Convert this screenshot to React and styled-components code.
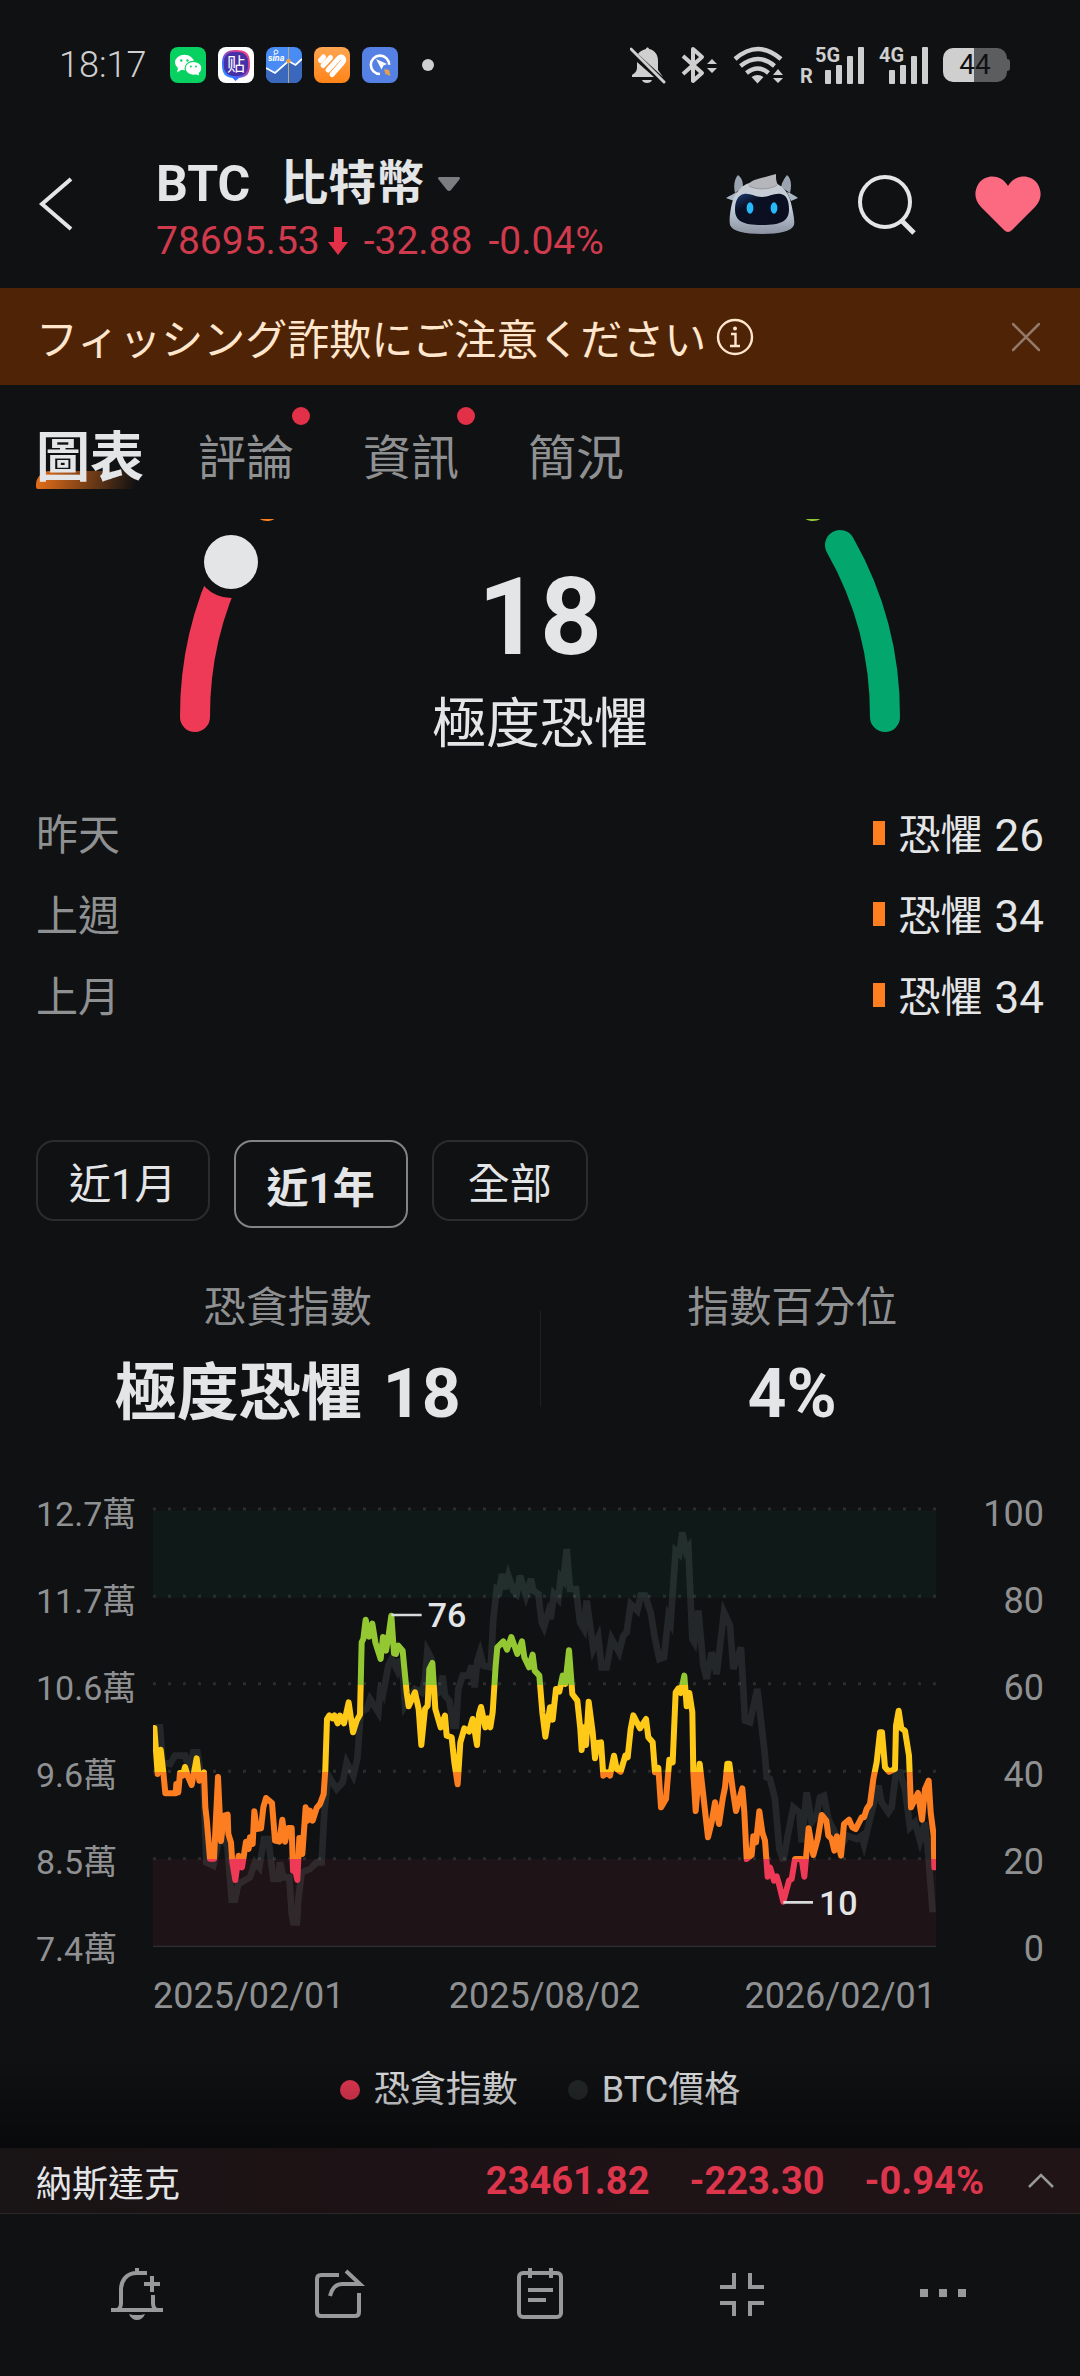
import { useState } from "react";
import styled, { createGlobalStyle } from "styled-components";

const GlobalStyle = createGlobalStyle`
  * {
    box-sizing: border-box;
  }
  body {
    margin: 0;
    background: #101113;
    color: #e4e5e7;
    font-family: Roboto, "Noto Sans CJK TC", "Noto Sans CJK JP", sans-serif;
  }
  button {
    padding: 0;
    border: none;
    background: none;
    color: inherit;
    font-family: inherit;
  }
  svg {
    display: block;
  }
`;

const Page = styled.div`
  display: flex;
  flex-direction: column;
`;

/* status bar */

const StatusBar = styled.div`
  display: flex;
  align-items: center;
  justify-content: space-between;
  height: 130px;
  padding: 0 70px 0 59px;
  color: #cfcfcf;
`;
const Clock = styled.span`
  margin-right: 12px;
  font-size: 36px;
  font-weight: 300;
`;
const StatusGroup = styled.div`
  display: flex;
  align-items: center;
  gap: ${(props) => props.$gap}px;
`;
const MoreDot = styled.span`
  width: 12px;
  height: 12px;
  margin-left: 12px;
  border-radius: 50%;
  background: #cfcfcf;
`;
const Battery = styled.span`
  display: flex;
  align-items: center;
`;
const BatteryBody = styled.span`
  width: 64px;
  height: 34px;
  border-radius: 10px;
  background: linear-gradient(90deg, #cfcfcf 48%, #5c5d5f 48%);
  color: #101113;
  font-size: 28px;
  line-height: 34px;
  text-align: center;
`;
const BatteryTip = styled.span`
  width: 3px;
  height: 12px;
  border-radius: 0 3px 3px 0;
  background: #5c5d5f;
`;

/* header */

const Header = styled.header`
  display: flex;
  align-items: center;
  height: 158px;
  padding: 0 38px 10px 36px;
`;
const IconButton = styled.button`
  display: flex;
  align-items: center;
  justify-content: center;
`;
const Symbol = styled.div`
  flex: 1;
  align-self: flex-end;
  padding: 0 0 10px 80px;
`;
const SymbolName = styled.h1`
  display: flex;
  align-items: center;
  gap: 30px;
  margin: 0;
  font-size: 48px;
  font-weight: 700;
  line-height: 60px;
`;
const SymbolCode = styled.span`
  font-size: 50px;
`;
const SymbolLocal = styled.span`
  display: flex;
  align-items: center;
  gap: 14px;
`;
const Quote = styled.div`
  display: flex;
  align-items: center;
  gap: 16px;
  color: #cf3a4d;
  font-size: 39px;
  line-height: 54px;
`;
const QuotePrice = styled.span`
  display: flex;
  align-items: center;
  gap: 8px;
`;
const HeaderActions = styled.div`
  display: flex;
  align-items: center;
  gap: 58px;
`;

/* banner */

const Banner = styled.div`
  display: flex;
  align-items: center;
  height: 97px;
  padding: 0 40px 0 36px;
  background: #4f2306;
  color: #ffe6cc;
`;
const BannerText = styled.span`
  margin-right: 10px;
  font-family: "Noto Sans CJK JP", sans-serif;
  font-size: 42px;
`;
const BannerClose = styled(IconButton)`
  margin-left: auto;
`;

/* tabs */

const Tabs = styled.nav`
  display: flex;
  align-items: center;
  height: 134px;
  padding: 14px 33px 0;
`;
const TabSlot = styled.div`
  width: 165px;
`;
const Tab = styled.button`
  position: relative;
  padding: 0 ${(props) => (props.$active ? 3 : 0)}px;
  color: ${(props) => (props.$active ? "#e4e5e7" : "#8f9092")};
  font-size: ${(props) => (props.$active ? 54 : 48)}px;
  font-weight: ${(props) => (props.$active ? 700 : 400)};
  line-height: 60px;
  white-space: nowrap;
  z-index: 0;
`;
const TabUnderline = styled.span`
  position: absolute;
  left: 3px;
  right: 3px;
  bottom: 0;
  height: 18px;
  border-radius: 14px 0 0 2px;
  background: linear-gradient(100deg, #e8701a, rgba(232, 112, 26, 0) 92%);
  z-index: -1;
`;
const TabDot = styled.span`
  position: absolute;
  top: -22px;
  right: -16px;
  width: 18px;
  height: 18px;
  border-radius: 50%;
  background: #e23049;
`;

/* gauge */

const Content = styled.main`
  position: relative;
  display: flex;
  flex-direction: column;
`;
const Gauge = styled.section`
  display: grid;
  height: 276px;
  > * {
    grid-area: 1 / 1;
  }
`;
const GaugeDrawing = styled.svg`
  width: 100%;
  overflow: hidden;
`;
const GaugeText = styled.div`
  padding-top: 38px;
  text-align: center;
`;
const GaugeValue = styled.div`
  font-size: 108px;
  font-weight: 700;
  line-height: 120px;
`;
const GaugeLabel = styled.div`
  padding-top: 18px;
  font-size: 54px;
  line-height: 60px;
`;

const History = styled.dl`
  margin: 0 0 102px;
  padding: 0 36px;
`;
const HistoryRow = styled.div`
  display: flex;
  align-items: center;
  justify-content: space-between;
  height: 81px;
  font-size: 42px;
  line-height: 60px;
`;
const HistoryTerm = styled.dt`
  color: #8f9092;
`;
const HistoryValue = styled.dd`
  display: flex;
  align-items: center;
  margin: 0;
`;
const HistoryNumber = styled.span`
  margin-left: 12px;
  font-size: 44px;
`;
const Mark = styled.span`
  width: 12px;
  height: 24px;
  margin: 0 14px 6px 0;
  background: #ff7e20;
`;

/* range chips */

const Ranges = styled.div`
  display: flex;
  align-items: flex-start;
  gap: 24px;
  height: 88px;
  padding: 0 36px;
`;
const Chip = styled.button`
  min-width: 156px;
  height: ${(props) => (props.$active ? 88 : 81)}px;
  padding: 0 31px;
  border: 2px solid ${(props) => (props.$active ? "#828385" : "#2b2c2e")};
  border-radius: 18px;
  font-size: 42px;
  font-weight: ${(props) => (props.$active ? 700 : 400)};
`;

/* stats */

const Stats = styled.section`
  display: grid;
  grid-template-columns: 1fr 1px 1fr;
  align-items: center;
  margin: 50px 36px 52px;
`;
const Stat = styled.div`
  text-align: center;
`;
const StatLabel = styled.div`
  color: #8f9092;
  font-size: 42px;
  line-height: 60px;
`;
const StatValue = styled.div`
  display: flex;
  align-items: center;
  justify-content: center;
  gap: 20px;
  height: 90px;
  margin-top: 11px;
  font-size: 62px;
  font-weight: 700;
  line-height: 90px;
`;
const StatNumber = styled.span`
  font-size: 68px;
`;
const Divider = styled.span`
  height: 96px;
  background: #1f2022;
`;

/* chart */

const Chart = styled.section`
  display: grid;
  grid-template-columns: 117px 1fr 108px;
  padding: 0 36px;
  color: #8f9092;
  font-size: 36px;
  line-height: 44px;
`;
const Scale = styled.div`
  display: flex;
  flex-direction: column;
  justify-content: space-between;
  padding-top: 1px;
  font-size: ${(props) => (props.$align === "left" ? 34 : 36)}px;
  text-align: ${(props) => props.$align};
  white-space: nowrap;
`;
const Plot = styled.svg`
  width: 100%;
  margin: 18px 0 24px;
  overflow: visible;
`;
const Dates = styled.div`
  display: flex;
  justify-content: space-between;
  grid-column: 2;
  padding-top: 3px;
`;
const Legend = styled.div`
  display: flex;
  justify-content: center;
  gap: 50px;
  padding: 50px 0 36px;
  font-size: 36px;
  line-height: 44px;
`;
const LegendItem = styled.span`
  display: flex;
  align-items: center;
  gap: 14px;
`;
const LegendDot = styled.span`
  width: 20px;
  height: 20px;
  border-radius: 50%;
  background: ${(props) => props.$color};
`;
const Fade = styled.div`
  position: absolute;
  right: 0;
  bottom: 0;
  left: 0;
  height: 90px;
  background: linear-gradient(rgba(0, 0, 0, 0), rgba(0, 0, 0, 0.45));
`;

/* footer */

const Ticker = styled.div`
  display: flex;
  align-items: center;
  height: 66px;
  padding: 0 26px 0 36px;
  border-bottom: 1px solid #2a2728;
  background: linear-gradient(90deg, #191415, #1d1215 35%, #201417);
`;
const TickerName = styled.span`
  flex: 1;
  font-size: 36px;
`;
const TickerNumbers = styled.span`
  display: flex;
  gap: 40px;
  margin-right: 44px;
  color: #dc354c;
  font-size: 38px;
  font-weight: 700;
`;
const Toolbar = styled.footer`
  display: grid;
  grid-template-columns: repeat(5, 1fr);
  height: 162px;
  padding: 0 36px 4px;
`;

const history = [
  { when: "昨天", value: 26 },
  { when: "上週", value: 34 },
  { when: "上月", value: 34 },
];

const tabs = [
  { label: "圖表" },
  { label: "評論", dot: true },
  { label: "資訊", dot: true },
  { label: "簡況" },
];

const ranges = ["近1月", "近1年", "全部"];

// plot units: 2349 wide, 1312 high, y goes down
const indexLine =
  "4,657 14,795 23,722 31,790 37,853 68,853 70,825 76,850 81,792 89,800 96,774 106,805 116,828 131,748 139,815 153,790 157,895 161,930 171,1049 183,1049 195,804 204,996 213,920 224,917 226,975 234,1000 238,1060 247,1113 257,1040 267,1075 279,998 287,1020 291,985 299,1005 304,907 311,960 324,958 331,895 339,867 357,882 366,995 379,998 388,932 396,998 406,957 416,957 420,1085 426,1080 433,1113 439,987 448,1035 458,895 464,935 471,905 479,935 491,897 501,885 512,855 517,780 522,630 529,619 538,628 544,619 554,643 561,620 573,643 587,580 600,670 611,635 621,617 626,400 631,390 638,332 648,383 658,344 667,400 683,450 690,384 699,425 706,385 715,320 723,433 729,435 736,410 749,425 761,550 767,592 786,550 797,600 805,708 816,600 824,590 829,480 838,462 847,600 863,655 876,620 881,680 896,685 904,760 914,826 922,700 934,658 948,668 959,630 972,708 978,615 984,594 997,655 1005,628 1012,655 1019,610 1028,470 1033,415 1051,397 1062,422 1075,384 1093,435 1107,397 1114,445 1128,475 1139,437 1145,485 1159,500 1168,610 1177,683 1191,595 1199,632 1209,540 1219,548 1229,500 1237,525 1248,424 1258,555 1273,575 1282,660 1286,723 1293,655 1299,708 1307,578 1319,670 1326,748 1333,702 1344,700 1351,800 1361,790 1371,800 1383,740 1391,780 1403,788 1417,740 1424,745 1433,660 1441,619 1461,658 1479,630 1486,685 1499,700 1506,790 1516,777 1524,895 1539,870 1549,752 1559,760 1568,550 1576,538 1583,552 1594,500 1601,592 1609,552 1618,610 1621,790 1628,906 1640,764 1651,860 1665,985 1676,940 1686,880 1698,945 1709,870 1716,835 1723,764 1729,764 1739,840 1749,906 1768,838 1774,910 1781,1050 1796,1038 1801,982 1809,1000 1819,907 1828,970 1836,995 1844,1103 1851,1075 1863,1115 1871,1102 1878,1125 1891,1178 1908,1115 1916,1110 1926,1050 1946,1050 1954,1103 1967,958 1981,1038 1994,990 2006,918 2020,935 2026,980 2036,990 2044,1025 2052,982 2064,1040 2073,945 2088,932 2098,955 2108,960 2121,935 2126,925 2133,925 2141,900 2151,885 2161,810 2171,760 2181,670 2187,670 2196,775 2208,788 2221,782 2226,780 2229,650 2237,605 2245,658 2256,665 2268,740 2274,895 2295,852 2307,932 2316,840 2327,815 2333,910 2342,980 2344,1075";
const priceLine =
  "9,655 21,655 29,760 51,765 66,740 96,740 109,780 121,730 133,730 141,780 151,810 160,1060 181,1070 201,980 223,1010 236,1172 246,1172 256,1125 291,1105 306,1060 319,1075 333,990 346,990 361,1110 376,1110 381,1060 391,1105 409,1105 416,1215 421,1240 432,1240 436,1170 446,1090 471,1080 491,1060 506,1060 514,910 526,800 551,840 569,820 581,760 601,800 613,750 623,610 641,600 651,570 676,610 683,530 691,550 706,470 716,450 731,480 736,450 751,510 756,590 786,540 806,550 816,510 823,425 836,450 841,560 859,550 869,500 876,560 889,575 901,650 909,650 916,540 929,500 946,500 956,470 965,535 973,455 981,430 991,470 1013,475 1021,330 1031,240 1039,245 1047,195 1056,240 1066,200 1081,245 1091,255 1101,200 1119,260 1134,210 1141,245 1156,255 1166,340 1173,355 1186,310 1193,330 1203,255 1216,270 1223,205 1231,215 1241,120 1251,240 1269,240 1281,340 1293,360 1301,275 1321,420 1336,385 1346,475 1361,475 1376,390 1398,430 1411,380 1421,370 1433,285 1453,305 1463,260 1476,260 1493,310 1506,390 1519,450 1533,445 1546,325 1553,340 1568,125 1579,135 1588,70 1599,125 1606,115 1618,390 1624,400 1636,305 1651,470 1661,510 1676,430 1691,495 1701,410 1713,310 1731,350 1741,480 1764,415 1776,635 1791,640 1813,540 1836,740 1841,805 1851,810 1866,870 1879,1020 1891,1055 1906,970 1921,895 1939,910 1946,1000 1961,850 1976,940 1991,920 2001,865 2013,860 2026,930 2051,980 2066,1010 2081,980 2111,990 2126,980 2133,1005 2151,930 2176,830 2186,880 2206,910 2216,895 2229,790 2241,790 2256,840 2271,955 2286,940 2301,995 2316,940 2326,1040 2339,1210";

const StatusLeft = () => (
  <StatusGroup $gap={12}>
    <Clock>18:17</Clock>
    <svg width="36" height="36" viewBox="0 0 36 36">
      <rect width="36" height="36" rx="8" fill="#07d160" />
      <ellipse cx="14.500" cy="15.500" rx="9.500" ry="7.800" fill="#fff" />
      <path d="M8 21l-1 4.500 5-3z" fill="#fff" />
      <circle cx="11.300" cy="13.500" r="1.200" fill="#07d160" />
      <circle cx="17.500" cy="13.500" r="1.200" fill="#07d160" />
      <ellipse cx="23.500" cy="21.300" rx="8.400" ry="7" fill="#fff" stroke="#07d160" strokeWidth="1.200" />
      <path d="M25 27l4 1.500-.5-4z" fill="#fff" />
      <circle cx="20.800" cy="19.500" r="1" fill="#07d160" />
      <circle cx="26" cy="19.500" r="1" fill="#07d160" />
    </svg>
    <svg width="36" height="36" viewBox="0 0 36 36">
      <defs>
        <linearGradient id="tieba" x1="1" y1="0" x2="0" y2="1">
          <stop offset="0" stopColor="#ff4c6a" />
          <stop offset="0.35" stopColor="#c23ca0" />
          <stop offset="0.7" stopColor="#3b6bff" />
          <stop offset="1" stopColor="#27b4ff" />
        </linearGradient>
      </defs>
      <rect width="36" height="36" rx="8" fill="#fff" />
      <path d="M18 3c11 0 14 4 14 14s-3 13-11 14l-3.500 3-3-3C7 30 4 27 4 17S8 3 18 3z" fill="url(#tieba)" />
      <rect x="6" y="5" width="24" height="24" rx="9" fill="#4630a8" />
      <text x="18" y="24" textAnchor="middle" fontSize="18" fontFamily="Noto Sans CJK SC" fill="#fff">
        贴
      </text>
    </svg>
    <svg width="36" height="36" viewBox="0 0 36 36">
      <rect width="36" height="36" rx="8" fill="#4a8cf5" />
      <path d="M0 21l9 6L22 15l7 3 7-6v16a8 8 0 0 1-8 8H8a8 8 0 0 1-8-8z" fill="#3a68bd" />
      <path d="M22.500 0v36" stroke="#b9a888" strokeWidth="1" />
      <path d="M0 21l9 5L22.500 14l7 4L36 12" fill="none" stroke="#fff" strokeWidth="1.800" />
      <circle cx="22.500" cy="14" r="2.200" fill="#f2a33a" />
      <circle cx="10" cy="5" r="2" fill="none" stroke="#fff" strokeWidth="1" />
      <text x="2" y="14" fontSize="9" fontStyle="italic" fontWeight="700" fill="#fff">
        sina
      </text>
    </svg>
    <svg width="36" height="36" viewBox="0 0 36 36">
      <defs>
        <linearGradient id="band" x2="0" y2="1">
          <stop offset="0" stopColor="#ffa550" />
          <stop offset="1" stopColor="#ff8418" />
        </linearGradient>
      </defs>
      <rect width="36" height="36" rx="8" fill="url(#band)" />
      <g fill="none" stroke="#fff" strokeWidth="5" strokeLinecap="round">
        <path d="M6.500 13.500l3-3.500" />
        <path d="M9 18.500l7.500-8" />
        <path d="M14 23l11-12c4-3 6 2 3.500 4.500L18 27.500" strokeLinejoin="round" />
      </g>
    </svg>
    <svg width="36" height="36" viewBox="0 0 36 36">
      <rect width="36" height="36" rx="8" fill="#5580e4" />
      <path d="M18 27a9.200 9.200 0 1 1 9.200-9.200" fill="none" stroke="#fff" strokeWidth="2.600" />
      <path d="M14 12l11 5-3.500 1.500-2 4z" fill="#fff" />
      <path d="M22 22l5 1 1.500 6-5-2z" fill="#e6a04a" />
    </svg>
    <MoreDot />
  </StatusGroup>
);

const Signal = ({ label, roaming }) => (
  <svg width={roaming ? 64 : 49} height="46" viewBox={roaming ? "-15 -4 64 46" : "0 -4 49 46"} fill="#cfcfcf">
    {roaming && (
      <text x="-15" y="37" fontSize="20" fontWeight="700">
        R
      </text>
    )}
    <text x="0" y="16" fontSize="20" fontWeight="700">
      {label}
    </text>
    <rect x="10" y="24" width="6" height="14" rx="1" />
    <rect x="21" y="19" width="6" height="19" rx="1" />
    <rect x="32" y="10" width="6" height="28" rx="1" />
    <rect x="43" y="1" width="6" height="37" rx="1" />
  </svg>
);

const StatusRight = () => (
  <StatusGroup $gap={15}>
    <svg width="36" height="38" viewBox="0 0 36 38" fill="#cfcfcf">
      <path d="M8 8c2-3 5-4 8-5 0-2 3-2 3 0 6 1 9 6 9 12v9l5 7z" />
      <path d="M7 16v6c0 3-2 5-5 7v2h22z" />
      <path d="M12 34h10c-1 4-9 4-10 0z" />
      <path d="M1 3l33 33" stroke="#cfcfcf" strokeWidth="3" strokeLinecap="round" />
    </svg>
    <svg width="37" height="38" viewBox="0 0 37 38" fill="none" stroke="#cfcfcf" strokeWidth="4">
      <path d="M2 10l19 17-9 8V3l9 8L2 28" strokeLinejoin="round" />
      <path d="M31 13l5 5H26zM31 27l5-5H26z" fill="#cfcfcf" stroke="none" />
    </svg>
    <svg width="52" height="38" viewBox="0 0 52 38" fill="none" stroke="#cfcfcf" strokeWidth="4.500">
      <path d="M2 13q23-20 46 0M7.500 20q17.500-14 34 0M13.500 27q11.500-9 22 0" />
      <path d="M18.500 31q6-4 12 0l-6 6.500z" fill="#cfcfcf" stroke="none" />
      <path d="M45 23l5 6H40zM45 37l5-5H40z" fill="#cfcfcf" stroke="none" />
    </svg>
    <Signal label="5G" roaming />
    <Signal label="4G" />
    <Battery>
      <BatteryBody>44</BatteryBody>
      <BatteryTip />
    </Battery>
  </StatusGroup>
);

const Robot = () => (
  <svg width="72" height="62" viewBox="0 0 72 62">
    <defs>
      <linearGradient id="shell" x2="0" y2="1">
        <stop offset="0" stopColor="#c9cbd0" />
        <stop offset="0.5" stopColor="#c2cfdc" />
        <stop offset="1" stopColor="#8b91a0" />
      </linearGradient>
      <linearGradient id="visor" x2="1" y2="1">
        <stop offset="0" stopColor="#1d3f75" />
        <stop offset="0.3" stopColor="#0a1024" />
        <stop offset="1" stopColor="#0b0d1c" />
      </linearGradient>
    </defs>
    <path d="M9 20C7 12 9 5 12 2c4 3 5 7 5 12zM64 20c2-8 1-15-3-18-3 4-5 7-6 12z" fill="#9aa4b0" />
    <path d="M12 19C8 20 4 23 0 25l8 3zM61 19c4 1 8 4 11 6l-7 3z" fill="#a9b6c3" />
    <path d="M36 8c17 0 26 8 29 22 2 9 4 17 3 22-2 6-14 9-32 9S6 58 4 52c-1-5 0-13 2-22C10 16 19 8 36 8z" fill="url(#shell)" />
    <path d="M22 12c3-6 15-7 28-11 0 5 0 7 2 11-9 5-24 5-30 0z" fill="#b4b6bb" />
    <path d="M23 13c7 4 21 4 28-1" fill="none" stroke="#94979d" />
    <path d="M18 21c6-1 11 3 18 3s12-4 19-3c6 1 8 8 8 15 0 12-7 16-27 16S9 48 9 36c0-8 3-14 9-15z" fill="url(#visor)" />
    <ellipse cx="24" cy="35" rx="3.400" ry="5.800" fill="#28b9fb" />
    <ellipse cx="48" cy="35" rx="3.400" ry="5.800" fill="#28b9fb" />
  </svg>
);

const GaugeArcs = () => (
  <GaugeDrawing viewBox="0 0 1080 220" fill="none" strokeWidth="30" strokeLinecap="round">
    <path d="M195 198A345 345 0 0 1 231 43" stroke="#ee3a56" />
    <path d="M267 -13A345 345 0 0 1 400 -117" stroke="#ff7e20" />
    <path d="M813 -13A345 345 0 0 0 680 -117" stroke="#94c833" />
    <path d="M840 26A345 345 0 0 1 885 198" stroke="#03a66d" />
    <circle cx="231" cy="43" r="36" fill="#101113" />
    <circle cx="231" cy="43" r="27" fill="#e4e5e7" />
  </GaugeDrawing>
);

const IndexPlot = () => (
  <Plot viewBox="0 0 2349 1314" fill="none">
    <defs>
      <linearGradient id="level" gradientUnits="userSpaceOnUse" x1="0" y1="0" x2="0" y2="1312">
        <stop offset="0.402" stopColor="#94c833" />
        <stop offset="0.402" stopColor="#ffc917" />
        <stop offset="0.602" stopColor="#ffc917" />
        <stop offset="0.602" stopColor="#fc7e21" />
        <stop offset="0.8" stopColor="#fc7e21" />
        <stop offset="0.8" stopColor="#ee3a56" />
      </linearGradient>
      <clipPath id="area">
        <rect width="2349" height="1314" />
      </clipPath>
    </defs>
    <rect y="5" width="2349" height="261" fill="#0f1a18" />
    <rect y="1050" width="2349" height="262" fill="#1e1316" />
    {[0, 262, 524, 787, 1049].map((y) => (
      <path key={y} d={`M0 ${y}H2349`} stroke="#2a2c2e" strokeWidth="9" strokeDasharray="9 36" />
    ))}
    <path d="M0 1312H2349" stroke="#2c2f33" strokeWidth="4" />
    <g clipPath="url(#area)">
      <polyline points={priceLine} stroke="rgba(220, 240, 240, 0.1)" strokeWidth="20" />
      <polyline
        points={indexLine}
        stroke="url(#level)"
        strokeWidth="18"
        strokeLinecap="round"
        strokeLinejoin="round"
      />
    </g>
    <path d="M715 318H806M1891 1180H1980" stroke="#d8dadc" strokeWidth="8" />
    <g fill="#e4e5e7" fontSize="102" fontWeight="500">
      <text x="824" y="355">
        76
      </text>
      <text x="1998" y="1217">
        10
      </text>
    </g>
  </Plot>
);

const ToolIcon = ({ children }) => (
  <svg width="54" height="54" viewBox="0 0 54 54" fill="none" stroke="#98999b" strokeWidth="4">
    {children}
  </svg>
);

const App = () => {
  const [tab, setTab] = useState("圖表");
  const [range, setRange] = useState("近1年");

  return (
    <Page>
      <GlobalStyle />
      <StatusBar>
        <StatusLeft />
        <StatusRight />
      </StatusBar>
      <Header>
        <IconButton aria-label="Back">
          <svg width="40" height="56" viewBox="0 0 40 56" fill="none" stroke="#e4e5e7" strokeWidth="4">
            <path d="M35 3L6 28l29 25" />
          </svg>
        </IconButton>
        <Symbol>
          <SymbolName>
            <SymbolCode>BTC</SymbolCode>
            <SymbolLocal>
              比特幣
              <svg width="22" height="15" viewBox="0 0 22 15">
                <path d="M1 0h20q2 1 0 3L13 13q-2 2-4 0L1 3q-2-2 0-3z" fill="#7c7d80" />
              </svg>
            </SymbolLocal>
          </SymbolName>
          <Quote>
            <QuotePrice>
              78695.53
              <svg width="20" height="28" viewBox="0 0 20 28">
                <path d="M6 0h8v15h6L10 28 0 15h6z" fill="#e23049" />
              </svg>
            </QuotePrice>
            <span>-32.88</span>
            <span>-0.04%</span>
          </Quote>
        </Symbol>
        <HeaderActions>
          <IconButton aria-label="Assistant">
            <Robot />
          </IconButton>
          <IconButton aria-label="Search">
            <svg width="60" height="62" viewBox="0 0 60 62" fill="none" stroke="#e4e5e7" strokeWidth="4">
              <circle cx="29" cy="29" r="25" />
              <path d="M46 48l12 12" strokeWidth="5" />
            </svg>
          </IconButton>
          <IconButton aria-label="Favorite">
            <svg width="68" height="58" viewBox="0 0 68 58">
              <path
                d="M34 11C41-1 56-1 63 8c6 9 4 18-2 24L38 55q-4 4-8 0L7 32C1 26-1 17 5 8 12-1 27-1 34 11z"
                fill="#fb6a81"
              />
            </svg>
          </IconButton>
        </HeaderActions>
      </Header>
      <Banner>
        <BannerText>フィッシング詐欺にご注意ください</BannerText>
        <svg width="38" height="38" viewBox="0 0 38 38" fill="none" stroke="#ffe6cc" strokeWidth="2.400">
          <circle cx="19" cy="19" r="17" />
          <path d="M15 16h4.500v12M14 28h10" />
          <circle cx="19" cy="10.500" r="2" fill="#ffe6cc" stroke="none" />
        </svg>
        <BannerClose aria-label="Close">
          <svg width="28" height="30" viewBox="0 0 28 30" stroke="#93796a" strokeWidth="2.500" strokeLinecap="round">
            <path d="M1 2l26 26M27 2L1 28" />
          </svg>
        </BannerClose>
      </Banner>
      <Tabs>
        {tabs.map(({ label, dot }) => (
          <TabSlot key={label}>
            <Tab $active={tab === label} onClick={() => setTab(label)}>
              {tab === label && <TabUnderline />}
              {label}
              {dot && <TabDot />}
            </Tab>
          </TabSlot>
        ))}
      </Tabs>
      <Content>
        <Gauge>
          <GaugeArcs />
          <GaugeText>
            <GaugeValue>18</GaugeValue>
            <GaugeLabel>極度恐懼</GaugeLabel>
          </GaugeText>
        </Gauge>
        <History>
          {history.map(({ when, value }) => (
            <HistoryRow key={when}>
              <HistoryTerm>{when}</HistoryTerm>
              <HistoryValue>
                <Mark />
                恐懼
                <HistoryNumber>{value}</HistoryNumber>
              </HistoryValue>
            </HistoryRow>
          ))}
        </History>
        <Ranges>
          {ranges.map((label) => (
            <Chip key={label} $active={range === label} onClick={() => setRange(label)}>
              {label}
            </Chip>
          ))}
        </Ranges>
        <Stats>
          <Stat>
            <StatLabel>恐貪指數</StatLabel>
            <StatValue>
              極度恐懼
              <StatNumber>18</StatNumber>
            </StatValue>
          </Stat>
          <Divider />
          <Stat>
            <StatLabel>指數百分位</StatLabel>
            <StatValue>
              <StatNumber>4%</StatNumber>
            </StatValue>
          </Stat>
        </Stats>
        <Chart>
          <Scale $align="left">
            {["12.7萬", "11.7萬", "10.6萬", "9.6萬", "8.5萬", "7.4萬"].map((tick) => (
              <span key={tick}>{tick}</span>
            ))}
          </Scale>
          <IndexPlot />
          <Scale $align="right">
            {[100, 80, 60, 40, 20, 0].map((tick) => (
              <span key={tick}>{tick}</span>
            ))}
          </Scale>
          <Dates>
            <span>2025/02/01</span>
            <span>2025/08/02</span>
            <span>2026/02/01</span>
          </Dates>
        </Chart>
        <Legend>
          <LegendItem>
            <LegendDot $color="#ee3a56" />
            恐貪指數
          </LegendItem>
          <LegendItem>
            <LegendDot $color="#25292a" />
            BTC價格
          </LegendItem>
        </Legend>
        <Fade />
      </Content>
      <Ticker>
        <TickerName>納斯達克</TickerName>
        <TickerNumbers>
          <span>23461.82</span>
          <span>-223.30</span>
          <span>-0.94%</span>
        </TickerNumbers>
        <IconButton aria-label="Expand">
          <svg width="26" height="16" viewBox="0 0 26 16" fill="none" stroke="#98999b" strokeWidth="2.500">
            <path d="M1 14L13 2l12 12" />
          </svg>
        </IconButton>
      </Ticker>
      <Toolbar>
        <IconButton aria-label="Alert">
          <ToolIcon>
            <path d="M1 44h52M27 2v6M37 7H27C16 7 11 15 11 24v13c0 4-1 6-4 7M43 29v8c0 4 1 6 4 7" />
            <path d="M34 18h16M42 10v16" />
            <path d="M19 48c3 8 13 8 16 0l-4 1h-8z" fill="#98999b" stroke="none" />
          </ToolIcon>
        </IconButton>
        <IconButton aria-label="Share">
          <ToolIcon>
            <path d="M28 9H10q-4 0-4 4v33q0 4 4 4h34q4 0 4-4V27" />
            <path d="M19 30c2-8 6-12 12-12h18L35 5" />
          </ToolIcon>
        </IconButton>
        <IconButton aria-label="Notes">
          <ToolIcon>
            <rect x="6" y="7" width="42" height="44" rx="4" />
            <path d="M17 2v10M38 2v10M15 24h25M15 34h18" />
          </ToolIcon>
        </IconButton>
        <IconButton aria-label="Collapse">
          <ToolIcon>
            <path d="M5 21h14V7M49 21H35V7M5 37h14v13M49 37H35v13" />
          </ToolIcon>
        </IconButton>
        <IconButton aria-label="More">
          <ToolIcon>
            <path d="M4 27h8M23 27h8M42 27h8" strokeWidth="8" />
          </ToolIcon>
        </IconButton>
      </Toolbar>
    </Page>
  );
};

export default App;
